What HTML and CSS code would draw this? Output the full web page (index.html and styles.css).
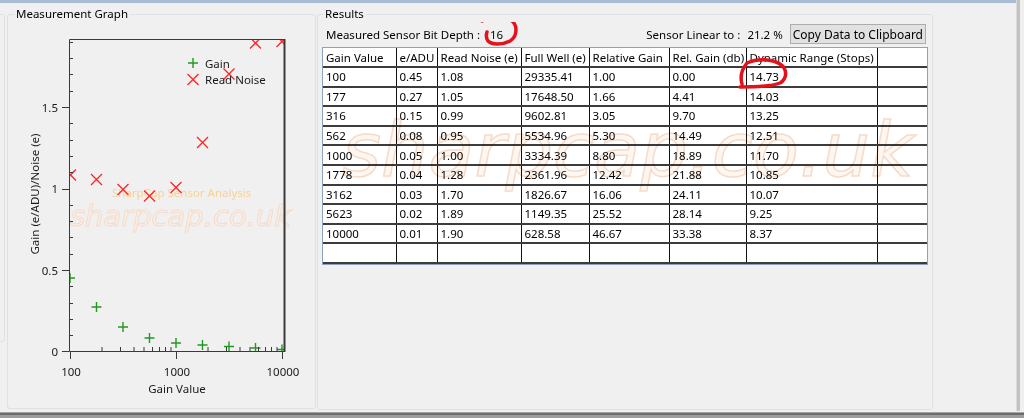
FILE: index.html
```html
<!DOCTYPE html>
<html lang="en">
<head>
    <meta charset="UTF-8">
    <meta name="viewport" content="width=device-width, initial-scale=1.0">
    <title>Sensor Analysis</title>
    <link rel="stylesheet" href="styles.css">
</head>
<body>

<div class="window">
    <div class="upper">
        <div class="pane">
            <div class="topbar"></div>
            <div class="main">
                <div class="stub"></div>

                <fieldset class="group graph">
                    <legend>Measurement Graph</legend>
                    <svg class="chart" width="307" height="386" viewBox="8 22 307 386">
                        <defs>
                            <clipPath id="plotclip"><rect x="69" y="39" width="216" height="313"/></clipPath>
                            <path id="plus" d="M-5 0h10M0 -5v10"/>
                            <path id="cross" d="M-5.5 -5.5l11 11M5.5 -5.5l-11 11"/>
                        </defs>

                        <text class="wm-small" x="70" y="226">sharpcap.co.uk</text>
                        <text class="wm-title" x="112" y="197">SharpCap Sensor Analysis</text>

                        <g clip-path="url(#plotclip)">
                            <g class="gain">
                                <use href="#plus" x="70" y="278"/>
                                <use href="#plus" x="96.5" y="307"/>
                                <use href="#plus" x="123" y="327"/>
                                <use href="#plus" x="149.5" y="338"/>
                                <use href="#plus" x="176" y="343"/>
                                <use href="#plus" x="202.5" y="345"/>
                                <use href="#plus" x="229" y="346.5"/>
                                <use href="#plus" x="255.5" y="348"/>
                                <use href="#plus" x="282" y="349.5"/>
                            </g>
                            <g class="noise">
                                <use href="#cross" x="70.5" y="175"/>
                                <use href="#cross" x="96.5" y="179.5"/>
                                <use href="#cross" x="123" y="189.5"/>
                                <use href="#cross" x="149.5" y="196"/>
                                <use href="#cross" x="176" y="187.5"/>
                                <use href="#cross" x="202.5" y="142.5"/>
                                <use href="#cross" x="229" y="74"/>
                                <use href="#cross" x="255.5" y="43"/>
                                <use href="#cross" x="282" y="41.5"/>
                            </g>
                        </g>

                        <g class="frame">
                            <path d="M69.5 39.5H284.5V351.5H69.5Z"/>
                            <path class="thick" d="M284.5 39V352"/>
                        </g>

                        <g class="ticks">
                            <path d="M69 335.5h4M69 319.5h4M69 303.5h4M69 286.5h4M69 254.5h4M69 237.5h4M69 221.5h4M69 205.5h4M69 172.5h4M69 156.5h4M69 140.5h4M69 123.5h4M69 91.5h4M69 74.5h4M69 58.5h4M69 42.5h4"/>
                            <path d="M62 351.5h7M62 270.5h7M62 189.5h7M62 107.5h7"/>
                            <path d="M102 352v-5M120.5 352v-5M134 352v-5M144 352v-5M152.5 352v-5M159.5 352v-5M165.5 352v-5M171 352v-5M208 352v-5M226.5 352v-5M240 352v-5M250 352v-5M258.5 352v-5M265.5 352v-5M271.5 352v-5M277 352v-5"/>
                            <path d="M70.5 352v7M176.5 352v7M282.5 352v7"/>
                        </g>

                        <g class="labels">
                            <text x="58" y="112" text-anchor="end">1.5</text>
                            <text x="58" y="193" text-anchor="end">1</text>
                            <text x="58" y="275" text-anchor="end">0.5</text>
                            <text x="58" y="356" text-anchor="end">0</text>
                            <text x="71" y="376" text-anchor="middle">100</text>
                            <text x="177" y="376" text-anchor="middle">1000</text>
                            <text x="283" y="376" text-anchor="middle">10000</text>
                            <text x="177" y="393" text-anchor="middle">Gain Value</text>
                            <text x="39" y="194" text-anchor="middle" transform="rotate(-90 39 194)">Gain (e/ADU)/Noise (e)</text>
                        </g>

                        <g class="legend-key">
                            <use class="gain" href="#plus" x="193" y="63"/>
                            <use class="noise" href="#cross" x="193" y="79.5"/>
                            <text x="205" y="68">Gain</text>
                            <text x="205" y="84">Read Noise</text>
                        </g>
                    </svg>
                </fieldset>

                <fieldset class="group results">
                    <legend>Results</legend>
                    <div class="results-body">
                        <div class="info">
                            <span>Measured Sensor Bit Depth :</span>
                            <span class="bits">16</span>
                            <span class="grow"></span>
                            <span>Sensor Linear to :</span>
                            <span class="linear">21.2 %</span>
                            <button class="copy">Copy Data to Clipboard</button>
                        </div>

                        <div class="grid">
                            <table>
                                <colgroup>
                                    <col style="width:73px"><col style="width:41px"><col style="width:84px"><col style="width:68px">
                                    <col style="width:80px"><col style="width:77px"><col style="width:131px"><col>
                                </colgroup>
                                <thead>
                                    <tr><th>Gain Value</th><th>e/ADU</th><th>Read Noise (e)</th><th>Full Well (e)</th><th>Relative Gain</th><th>Rel. Gain (db)</th><th>Dynamic Range (Stops)</th><th></th></tr>
                                </thead>
                                <tbody>
                                    <tr><td>100</td><td>0.45</td><td>1.08</td><td>29335.41</td><td>1.00</td><td>0.00</td><td>14.73</td><td></td></tr>
                                    <tr><td>177</td><td>0.27</td><td>1.05</td><td>17648.50</td><td>1.66</td><td>4.41</td><td>14.03</td><td></td></tr>
                                    <tr><td>316</td><td>0.15</td><td>0.99</td><td>9602.81</td><td>3.05</td><td>9.70</td><td>13.25</td><td></td></tr>
                                    <tr><td>562</td><td>0.08</td><td>0.95</td><td>5534.96</td><td>5.30</td><td>14.49</td><td>12.51</td><td></td></tr>
                                    <tr><td>1000</td><td>0.05</td><td>1.00</td><td>3334.39</td><td>8.80</td><td>18.89</td><td>11.70</td><td></td></tr>
                                    <tr><td>1778</td><td>0.04</td><td>1.28</td><td>2361.96</td><td>12.42</td><td>21.88</td><td>10.85</td><td></td></tr>
                                    <tr><td>3162</td><td>0.03</td><td>1.70</td><td>1826.67</td><td>16.06</td><td>24.11</td><td>10.07</td><td></td></tr>
                                    <tr><td>5623</td><td>0.02</td><td>1.89</td><td>1149.35</td><td>25.52</td><td>28.14</td><td>9.25</td><td></td></tr>
                                    <tr><td>10000</td><td>0.01</td><td>1.90</td><td>628.58</td><td>46.67</td><td>33.38</td><td>8.37</td><td></td></tr>
                                    <tr><td></td><td></td><td></td><td></td><td></td><td></td><td></td><td></td></tr>
                                </tbody>
                            </table>
                        </div>

                        <!-- watermark + red marker scribbles drawn over the grid -->
                        <svg class="overlay" width="610" height="250" viewBox="322 22 610 250">
                            <text class="wm-big" x="342" y="176">sharpcap.co.uk</text>
                            <path class="scribble" d="M482 21C492 17 506 17 512 21C518 26 517 37 510 41C502 45 492 45 488 41C486 38 486 35 487 32"/>
                            <path class="scribble" d="M747 63C758 58 772 59 780 64C788 69 787 79 780 83C770 87 752 87 740 87M742 84C740 77 742 69 747 63"/>
                        </svg>
                    </div>
                </fieldset>
            </div>
        </div>
        <div class="splitter"></div>
    </div>
    <div class="bottombar"></div>
</div>

</body>
</html>
```

FILE: styles.css
```css
body{
    margin: 0;
    background-color: #f0f0f0;
    font-family: "Noto Sans", "Open Sans", sans-serif;
    font-size: 11.5px;
    color: #000;
}

.window{
    height: 418px;
    display: flex;
    flex-direction: column;
    overflow: hidden;
}

.upper{
    flex: 1;
    display: flex;
    min-height: 0;
}

.pane{
    width: 1016px;
    display: flex;
    flex-direction: column;
}

.topbar{
    height: 3px;
    background-color: #a9bcd4;
}

.main{
    flex: 1;
    display: flex;
    align-items: flex-start;
}

.stub{
    width: 4px;
    height: 326px;
    margin: 11px 2px 0 0;
    border: 1px solid #dde1e5;
    border-left: 0;
    border-radius: 0 3px 3px 0;
}

/* group boxes */
.group{
    box-sizing: border-box;
    margin: 3px 0 0 0;
    min-width: 0;
    border: 1px solid #dde1e5;
    border-radius: 3px;
}

.group legend{
    padding: 0 2px;
    line-height: 16px;
}

.graph{
    width: 309px;
    height: 403px;
    padding: 0;
}

.graph legend{
    margin-left: 6px;
}

.results{
    width: 616px;
    height: 404px;
    margin-left: 1px;
    padding: 0 4px;
}

.results legend{
    margin-left: 1px;
}

/* chart */
.chart{
    display: block;
}

.chart text{
    font-family: "Noto Sans", "Open Sans", sans-serif;
    font-size: 11.5px;
    fill: #1a1a1a;
}

.frame path, .ticks path{
    fill: none;
    stroke: #3a3a3a;
    stroke-width: 1;
}

.frame .thick{
    stroke-width: 2;
}

.gain use, use.gain{
    fill: none;
    stroke: #1f9a1f;
    stroke-width: 1.4;
}

.noise use, use.noise{
    fill: none;
    stroke: #ff2424;
    stroke-width: 1.3;
}

.chart .wm-title{
    fill: #f7d197;
}

.chart .wm-small{
    font-family: "DejaVu Sans", sans-serif;
    font-style: italic;
    font-weight: 200;
    font-size: 29px;
    fill: #f9efe8;
    stroke: #f2dccd;
    stroke-width: 1;
}

/* results */
.results-body{
    position: relative;
}

.info{
    display: flex;
    align-items: center;
    height: 20px;
    padding: 2px 0 2px 4px;
}

.bits{
    margin-left: 10px;
}

.grow{
    flex: 1;
}

.linear{
    margin: 0 7px 0 7px;
}

.copy{
    height: 20px;
    margin-right: 2px;
    padding: 0 2px;
    font: inherit;
    font-size: 12px;
    color: #000;
    background-color: #e1e1e1;
    border: 1px solid #adadad;
    border-radius: 0;
}

.grid{
    box-sizing: border-box;
    width: 606px;
    margin-top: 1px;
    background-color: #fff;
    border: 1px solid #8ea2bf;
}

.grid table{
    width: 100%;
    border-collapse: collapse;
    table-layout: fixed;
}

.grid th, .grid td{
    font-weight: normal;
    text-align: left;
    padding: 0 0 0 3px;
    border-right: 1px solid #111;
    border-bottom: 2px solid #3c3c3c;
    white-space: nowrap;
    overflow: hidden;
}

.grid th{
    height: 18px;
}

.grid td{
    height: 17.6px;
}

.grid th:last-child, .grid td:last-child{
    border-right: 0;
}

.overlay{
    position: absolute;
    left: 0;
    top: 0;
    pointer-events: none;
}

.wm-big{
    font-family: "DejaVu Sans", sans-serif;
    font-style: italic;
    font-weight: 200;
    font-size: 75px;
    fill: #fdf6f1;
    stroke: #f4dcca;
    stroke-width: 1.5;
    mix-blend-mode: multiply;
}

.scribble{
    fill: none;
    stroke: #e3121b;
    stroke-width: 3.5;
    stroke-linecap: round;
    stroke-linejoin: round;
}

.splitter{
    width: 3px;
    margin-right: 4px;
    border-left: 1px solid #dadada;
    background-color: #c3c3c3;
}

.bottombar{
    height: 7px;
    background: linear-gradient(#f0f0f0 0 1px, #a3a3a3 1px 2px, #6c6c6c 2px 4px, #9d9d9d 4px);
}
```
